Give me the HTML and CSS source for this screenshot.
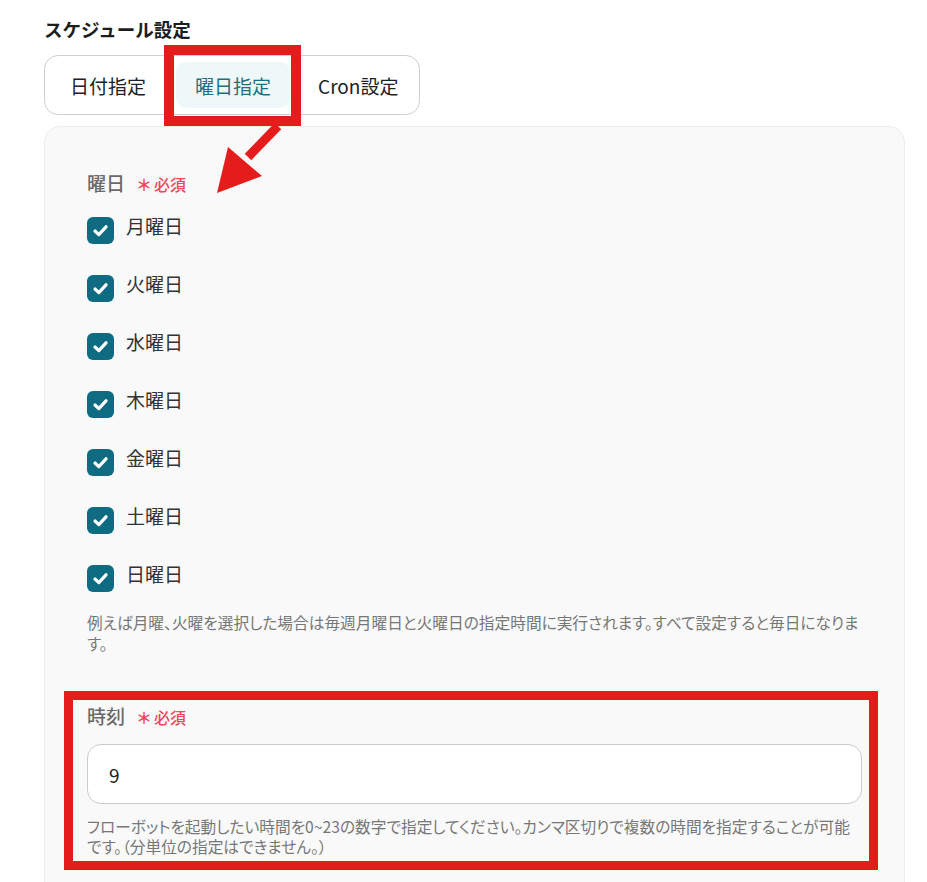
FILE: index.html
```html
<!DOCTYPE html>
<html lang="ja">
<head>
<meta charset="utf-8">
<title>スケジュール設定</title>
<link rel="stylesheet" href="styles.css">
</head>
<body>
<div class="page">
  <h2 class="title">スケジュール設定</h2>
  <div class="tabs">
    <div class="tab">日付指定</div>
    <div class="tab active">曜日指定</div>
    <div class="tab last">Cron設定</div>
  </div>
  <svg class="arrow" width="90" height="90" viewBox="0 0 90 90">
    <line x1="68" y1="2" x2="38" y2="33" stroke="#e51c1c" stroke-width="9"/>
    <polygon points="7,69 18,23 52,52" fill="#e51c1c"/>
  </svg>
  <div class="panel">
    <div class="field">
      <div class="label">曜日<span class="req"><span class="ast">＊</span>必須</span></div>
      <div class="checks">
        <label class="check"><span class="box"><svg width="27" height="27" viewBox="0 0 27 27"><path d="M8 14 l3.8 3.6 l7.2-7.8" fill="none" stroke="#fff" stroke-width="3.2" stroke-linecap="round" stroke-linejoin="round"/></svg></span><span class="ctext">月曜日</span></label>
        <label class="check"><span class="box"><svg width="27" height="27" viewBox="0 0 27 27"><path d="M8 14 l3.8 3.6 l7.2-7.8" fill="none" stroke="#fff" stroke-width="3.2" stroke-linecap="round" stroke-linejoin="round"/></svg></span><span class="ctext">火曜日</span></label>
        <label class="check"><span class="box"><svg width="27" height="27" viewBox="0 0 27 27"><path d="M8 14 l3.8 3.6 l7.2-7.8" fill="none" stroke="#fff" stroke-width="3.2" stroke-linecap="round" stroke-linejoin="round"/></svg></span><span class="ctext">水曜日</span></label>
        <label class="check"><span class="box"><svg width="27" height="27" viewBox="0 0 27 27"><path d="M8 14 l3.8 3.6 l7.2-7.8" fill="none" stroke="#fff" stroke-width="3.2" stroke-linecap="round" stroke-linejoin="round"/></svg></span><span class="ctext">木曜日</span></label>
        <label class="check"><span class="box"><svg width="27" height="27" viewBox="0 0 27 27"><path d="M8 14 l3.8 3.6 l7.2-7.8" fill="none" stroke="#fff" stroke-width="3.2" stroke-linecap="round" stroke-linejoin="round"/></svg></span><span class="ctext">金曜日</span></label>
        <label class="check"><span class="box"><svg width="27" height="27" viewBox="0 0 27 27"><path d="M8 14 l3.8 3.6 l7.2-7.8" fill="none" stroke="#fff" stroke-width="3.2" stroke-linecap="round" stroke-linejoin="round"/></svg></span><span class="ctext">土曜日</span></label>
        <label class="check"><span class="box"><svg width="27" height="27" viewBox="0 0 27 27"><path d="M8 14 l3.8 3.6 l7.2-7.8" fill="none" stroke="#fff" stroke-width="3.2" stroke-linecap="round" stroke-linejoin="round"/></svg></span><span class="ctext">日曜日</span></label>
      </div>
      <p class="help">例えば月曜、火曜を選択した場合は毎週月曜日と火曜日の指定時間に実行されます。すべて設定すると毎日になります。</p>
    </div>
    <div class="field time">
      <div class="label">時刻<span class="req"><span class="ast">＊</span>必須</span></div>
      <div class="input">9</div>
      <p class="help help2">フローボットを起動したい時間を0~23の数字で指定してください。カンマ区切りで複数の時間を指定することが可能です。（分単位の指定はできません。）</p>
    </div>
  </div>
</div>
</body>
</html>
```

FILE: styles.css
```css
html, body {
  margin: 0;
  padding: 0;
  background: #ffffff;
}
body {
  font-family: "Noto Sans CJK JP", "Noto Sans", sans-serif;
  color: #222;
}
.page {
  position: relative;
  padding: 15px 22px 0 44px;
}
.title {
  margin: 0;
  font-size: 18.5px;
  font-weight: 700;
  line-height: 28px;
  color: #1d1d1d;
}
.tabs {
  margin-top: 12px;
  display: inline-flex;
  gap: 11px;
  padding: 6px;
  border: 1px solid #cfcfcf;
  border-radius: 14px;
  background: #fff;
}
.tab {
  position: relative;
  height: 46px;
  padding: 0 19px;
  display: flex;
  align-items: center;
  font-size: 19px;
  color: #222;
  border-radius: 10px;
}
.tab.last {
  padding: 0 15px 0 17px;
}
.tab.active {
  background: #eef8f8;
  color: #1f6e83;
}
.tab.active::after {
  content: "";
  position: absolute;
  left: -12px;
  right: -11px;
  top: -17px;
  bottom: -18px;
  border: 10px solid #e51c1c;
}
.arrow {
  position: absolute;
  left: 210px;
  top: 124px;
  z-index: 2;
}
.panel {
  margin-top: 11px;
  background: #f9f9f9;
  border: 1px solid #ededed;
  border-radius: 16px;
  padding: 43px 42px 60px 42px;
}
.field {
  position: relative;
  display: flex;
  flex-direction: column;
}
.label {
  font-size: 19px;
  line-height: 26px;
  font-weight: 500;
  color: #6a6a6a;
}
.req {
  margin-left: 11px;
  font-size: 16px;
  color: #f0455a;
}
.ast {
  font-weight: 700;
  margin-right: 2px;
}
.checks {
  margin-top: 16px;
  display: flex;
  flex-direction: column;
  gap: 27px;
}
.check {
  display: flex;
  align-items: flex-start;
  gap: 12px;
}
.box {
  margin-top: 4px;
  width: 27px;
  height: 27px;
  border-radius: 6px;
  background: #0f6b81;
  display: flex;
}
.ctext {
  font-size: 19px;
  line-height: 26px;
  color: #333;
}
.help {
  margin: 20px 0 0 0;
  font-size: 15.7px;
  line-height: 21px;
  color: #777;
  font-feature-settings: "palt";
}
.time {
  margin-top: 49px;
}
.time::after {
  content: "";
  position: absolute;
  left: -23px;
  right: -16px;
  top: -12px;
  bottom: -13px;
  border: 9px solid #e51c1c;
}
.input {
  box-sizing: border-box;
  margin-top: 14px;
  height: 60px;
  border: 1px solid #cccccc;
  border-radius: 14px;
  background: #fff;
  display: flex;
  align-items: center;
  padding-left: 21px;
  font-size: 19px;
  color: #222;
}
.help2 {
  margin-top: 13px;
  line-height: 20px;
}
```
